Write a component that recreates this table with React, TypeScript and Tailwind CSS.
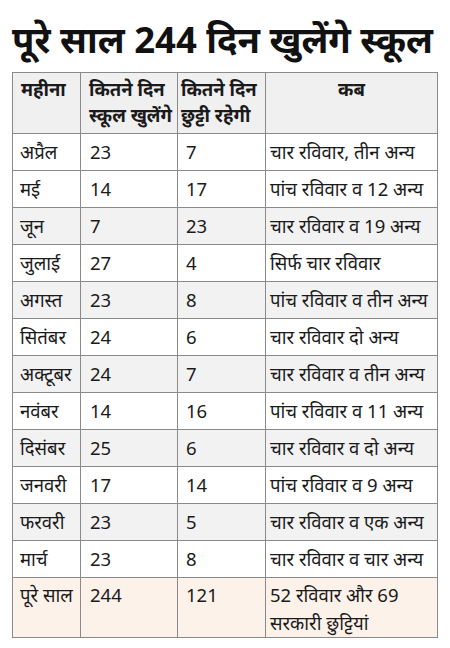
import React from 'react';

const rows = [
  { m: 'अप्रैल', open: '23', off: '7', when: 'चार रविवार, तीन अन्य', bg: 'bg-white' },
  { m: 'मई', open: '14', off: '17', when: 'पांच रविवार व 12 अन्य', bg: 'bg-white' },
  { m: 'जून', open: '7', off: '23', when: 'चार रविवार व 19 अन्य', bg: 'bg-[#f2f2f2]' },
  { m: 'जुलाई', open: '27', off: '4', when: 'सिर्फ चार रविवार', bg: 'bg-white' },
  { m: 'अगस्त', open: '23', off: '8', when: 'पांच रविवार व तीन अन्य', bg: 'bg-[#f2f2f2]' },
  { m: 'सितंबर', open: '24', off: '6', when: 'चार रविवार दो अन्य', bg: 'bg-white' },
  { m: 'अक्टूबर', open: '24', off: '7', when: 'चार रविवार व तीन अन्य', bg: 'bg-[#f2f2f2]' },
  { m: 'नवंबर', open: '14', off: '16', when: 'पांच रविवार व 11 अन्य', bg: 'bg-white' },
  { m: 'दिसंबर', open: '25', off: '6', when: 'चार रविवार व दो अन्य', bg: 'bg-[#f2f2f2]' },
  { m: 'जनवरी', open: '17', off: '14', when: 'पांच रविवार व 9 अन्य', bg: 'bg-white' },
  { m: 'फरवरी', open: '23', off: '5', when: 'चार रविवार व एक अन्य', bg: 'bg-[#f2f2f2]' },
  { m: 'मार्च', open: '23', off: '8', when: 'चार रविवार व चार अन्य', bg: 'bg-white' },
];

export default function App() {
  return (
    <div className="w-[450px] h-[648px] bg-white text-[#111] font-['Noto_Sans','Noto_Sans_Devanagari',sans-serif] pt-[14px] px-[12px]">
      <h1 className="text-[36.5px] leading-[50px] font-bold whitespace-nowrap">
        पूरे साल 244 दिन खुलेंगे स्कूल
      </h1>

      <table className="mt-[8px] w-[426px] border-collapse table-fixed text-[18.5px] leading-[26px] text-[#1a1a1a]">
        <colgroup>
          <col className="w-[68px]" />
          <col className="w-[97px]" />
          <col className="w-[88px]" />
          <col />
        </colgroup>
        <thead>
          <tr className="bg-[#f0f0f0] h-[61px] align-top">
            <th className="border border-[#8a8a8a] text-left font-bold px-[8px] pt-[3px]">महीना</th>
            <th className="border border-[#8a8a8a] text-left font-bold px-[8px] pt-[3px] whitespace-nowrap">कितने दिन<br />स्कूल खुलेंगे</th>
            <th className="border border-[#8a8a8a] text-left font-bold px-[3px] pt-[3px] whitespace-nowrap">कितने दिन<br />छुट्टी रहेगी</th>
            <th className="border border-[#8a8a8a] text-center font-bold pt-[3px]">कब</th>
          </tr>
        </thead>
        <tbody>
          {rows.map((r) => (
            <tr key={r.m} className={`${r.bg} h-[37px]`}>
              <td className="border border-[#8a8a8a] px-[7px] whitespace-nowrap">{r.m}</td>
              <td className="border border-[#8a8a8a] px-[9px]">{r.open}</td>
              <td className="border border-[#8a8a8a] px-[8px]">{r.off}</td>
              <td className="border border-[#8a8a8a] px-[4px] whitespace-nowrap">{r.when}</td>
            </tr>
          ))}
          <tr className="bg-[#fdf2ea] h-[60px] align-top leading-[28px]">
            <td className="border border-[#8a8a8a] px-[7px] pt-[3px] whitespace-nowrap">पूरे साल</td>
            <td className="border border-[#8a8a8a] px-[9px] pt-[3px]">244</td>
            <td className="border border-[#8a8a8a] px-[8px] pt-[3px]">121</td>
            <td className="border border-[#8a8a8a] px-[4px] pt-[3px]">52 रविवार और 69<br />सरकारी छुट्टियां</td>
          </tr>
        </tbody>
      </table>
    </div>
  );
}
